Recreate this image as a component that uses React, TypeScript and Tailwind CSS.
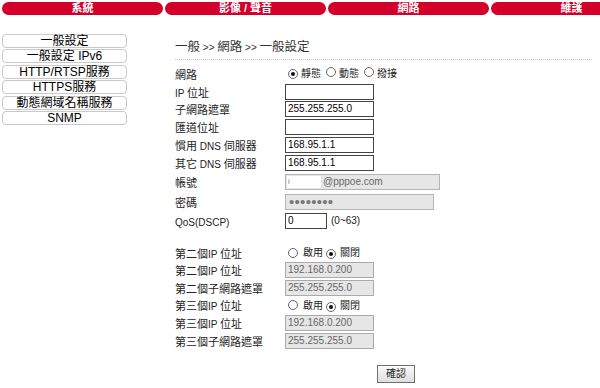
import React from "react";

const FONT = "font-['Liberation_Sans','Noto_Sans_CJK_TC',sans-serif]";

function Mixed({ t, cjk, lat }: { t: string; cjk: string; lat: string }) {
  const parts = t.split(/([\u3000-\u9fff\uff00-\uffef]+)/).filter((p) => p !== "");
  return (
    <>
      {parts.map((p, i) =>
        /[\u3000-\u9fff\uff00-\uffef]/.test(p) ? (
          <span key={i} className={cjk}>
            {p}
          </span>
        ) : (
          <span key={i} className={lat + " whitespace-pre"}>
            {p}
          </span>
        )
      )}
    </>
  );
}

function Radio({ on }: { on?: boolean }) {
  return (
    <span className="inline-flex w-[10px] h-[10px] rounded-full border border-[#666] bg-white items-center justify-center shrink-0">
      {on && <span className="w-[4px] h-[4px] rounded-full bg-[#111]" />}
    </span>
  );
}

function Label({ t }: { t: string }) {
  return (
    <div className="w-[110px] shrink-0 text-[#222] leading-none">
      <Mixed t={t} cjk="text-[11px]" lat="text-[10px]" />
    </div>
  );
}

function TextBox({ v, w = "w-[89px]", disabled }: { v?: string; w?: string; disabled?: boolean }) {
  return (
    <div
      className={
        "h-[16px] flex items-center pl-[2px] text-[10px] leading-none " +
        w +
        (disabled
          ? " bg-[#e6e6e6] border border-[#aaaaaa] text-[#666]"
          : " bg-white border border-[#444] text-black")
      }
    >
      {v}
    </div>
  );
}

function Row({ label, children, h = "h-[17.8px]" }: { label: string; children?: React.ReactNode; h?: string }) {
  return (
    <div className={"flex items-center " + h}>
      <Label t={label} />
      <div className="flex items-center">{children}</div>
    </div>
  );
}

function Tab({ t }: { t: string }) {
  return (
    <div className="w-[161px] h-[13px] shrink-0 rounded-full bg-[#d3002b] text-white font-bold text-[11px] leading-[13px] text-center">
      {t}
    </div>
  );
}

function Side({ t }: { t: string }) {
  return (
    <div className="h-[14px] rounded-[4px] border border-[#c9c9c9] bg-white flex items-center justify-center text-[12px] leading-none text-black">
      {t}
    </div>
  );
}

function OnOff() {
  return (
    <div className="flex items-center text-[10px] text-[#222] ml-[3px]">
      <Radio />
      <span className="ml-[5px]">啟用</span>
      <span className="ml-[3px]">
        <Radio on />
      </span>
      <span className="ml-[4px]">關閉</span>
    </div>
  );
}

export default function App() {
  return (
    <div className={"w-[600px] h-[388px] bg-white overflow-hidden " + FONT}>
      <div className="flex gap-[2px] pt-[2px] pl-[2px] w-[700px]">
        <Tab t="系統" />
        <Tab t="影像 / 聲音" />
        <Tab t="網路" />
        <Tab t="維護" />
      </div>
      <div className="flex mt-[19px]">
        <div className="w-[125px] ml-[2px] shrink-0 flex flex-col gap-[1.4px]">
          <Side t="一般設定" />
          <Side t="一般設定 IPv6" />
          <Side t="HTTP/RTSP服務" />
          <Side t="HTTPS服務" />
          <Side t="動態網域名稱服務" />
          <Side t="SNMP" />
        </div>
        <div className="ml-[48px] flex-1 pr-[8px]">
          <div className="mt-[5px] h-[14px] leading-[14px] text-[#333]">
            <Mixed t="一般 >> 網路 >> 一般設定" cjk="text-[12.5px]" lat="text-[10px]" />
          </div>
          <div className="mt-[6px] border-t border-dotted border-[#c8c8c8]" />
          <div className="mt-[5px]">
            <Row label="網路">
              <div className="flex items-center text-[10px] text-[#222] ml-[3px]">
                <Radio on />
                <span className="ml-[3px]">靜態</span>
                <span className="ml-[5px]">
                  <Radio />
                </span>
                <span className="ml-[3px]">動態</span>
                <span className="ml-[5px]">
                  <Radio />
                </span>
                <span className="ml-[3px]">撥接</span>
              </div>
            </Row>
            <Row label="IP 位址">
              <TextBox />
            </Row>
            <Row label="子網路遮罩">
              <TextBox v="255.255.255.0" />
            </Row>
            <Row label="匯道位址">
              <TextBox />
            </Row>
            <Row label="慣用 DNS 伺服器">
              <TextBox v="168.95.1.1" />
            </Row>
            <Row label="其它 DNS 伺服器">
              <TextBox v="168.95.1.1" />
            </Row>
            <Row label="帳號" h="h-[20px]">
              <div className="w-[155px] h-[16px] bg-[#e6e6e6] border border-[#b5b5b5] flex items-center text-[10px] leading-none text-[#666]">
                <span className="ml-[1px] w-[34px] h-[12px] bg-white flex items-center pl-[1px] text-[8px] text-[#888]">
                  i
                </span>
                <span className="ml-[2px]">@pppoe.com</span>
              </div>
            </Row>
            <Row label="密碼" h="h-[20px]">
              <div className="w-[149px] h-[16px] bg-[#e6e6e6] border border-[#b5b5b5] flex items-center pl-[3px] text-[15px] leading-none text-[#777] tracking-[0.3px]">
                ••••••••
              </div>
            </Row>
            <Row label="QoS(DSCP)" h="h-[18px]">
              <TextBox v="0" w="w-[42px]" />
              <span className="ml-[4px] text-[10px] text-[#222]">(0~63)</span>
            </Row>
          </div>
          <div className="mt-[14px]">
            <Row label="第二個IP 位址" h="h-[17.6px]">
              <OnOff />
            </Row>
            <Row label="第二個IP 位址" h="h-[17.6px]">
              <TextBox v="192.168.0.200" disabled />
            </Row>
            <Row label="第二個子網路遮罩" h="h-[17.6px]">
              <TextBox v="255.255.255.0" disabled />
            </Row>
            <Row label="第三個IP 位址" h="h-[17.6px]">
              <OnOff />
            </Row>
            <Row label="第三個IP 位址" h="h-[17.6px]">
              <TextBox v="192.168.0.200" disabled />
            </Row>
            <Row label="第三個子網路遮罩" h="h-[17.6px]">
              <TextBox v="255.255.255.0" disabled />
            </Row>
          </div>
          <div className="mt-[16px] pl-[202px]">
            <div className="w-[38px] h-[18px] border border-[#707070] bg-gradient-to-b from-[#fbfbfb] to-[#dedede] flex items-center justify-center text-[10px] text-[#222] leading-none">
              確認
            </div>
          </div>
        </div>
      </div>
    </div>
  );
}
